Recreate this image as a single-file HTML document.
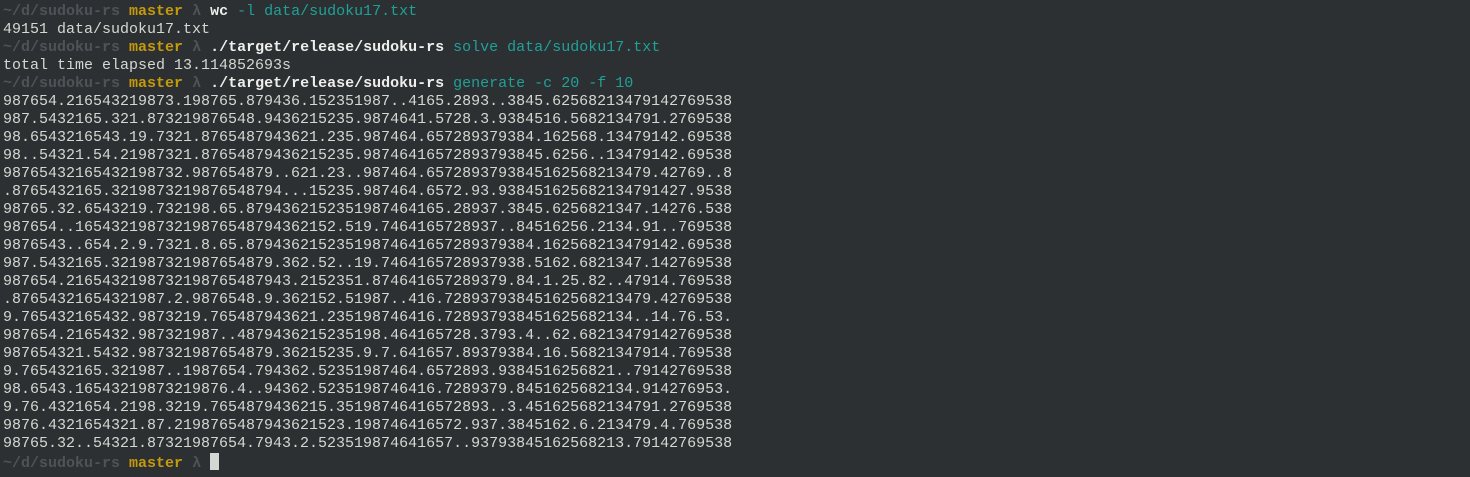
<!DOCTYPE html>
<html><head><meta charset="utf-8"><style>
html,body{margin:0;padding:0;background:#2c3032;width:1470px;height:477px;overflow:hidden}
pre{margin:0;padding:3px 0 0 3px;font-family:"Liberation Mono","DejaVu Sans Mono",monospace;font-size:15px;line-height:18px;color:#d4d8d2}
.p{color:#4d5357;font-weight:bold}
.m{color:#c49a0c;font-weight:bold}
.c{color:#eeeeec;font-weight:bold}
.a{color:#1fa198}
.cur{display:inline-block;width:9px;height:17px;background:#d4d8d2;vertical-align:-3px}
</style></head><body><pre><span class="p">~/d/sudoku-rs</span> <span class="m">master</span> <span class="p">λ</span> <span class="c">wc</span> <span class="a">-l data/sudoku17.txt</span>
49151 data/sudoku17.txt
<span class="p">~/d/sudoku-rs</span> <span class="m">master</span> <span class="p">λ</span> <span class="c">./target/release/sudoku-rs</span> <span class="a">solve data/sudoku17.txt</span>
total time elapsed 13.114852693s
<span class="p">~/d/sudoku-rs</span> <span class="m">master</span> <span class="p">λ</span> <span class="c">./target/release/sudoku-rs</span> <span class="a">generate -c 20 -f 10</span>
987654.216543219873.198765.879436.152351987..4165.2893..3845.62568213479142769538
987.5432165.321.873219876548.9436215235.9874641.5728.3.9384516.5682134791.2769538
98.6543216543.19.7321.8765487943621.235.987464.657289379384.162568.13479142.69538
98..54321.54.21987321.87654879436215235.98746416572893793845.6256..13479142.69538
98765432165432198732.987654879..621.23..987464.6572893793845162568213479.42769..8
.8765432165.3219873219876548794...15235.987464.6572.93.938451625682134791427.9538
98765.32.6543219.732198.65.8794362152351987464165.28937.3845.6256821347.14276.538
987654..16543219873219876548794362152.519.7464165728937..84516256.2134.91..769538
9876543..654.2.9.7321.8.65.87943621523519874641657289379384.162568213479142.69538
987.5432165.321987321987654879.362.52..19.7464165728937938.5162.6821347.142769538
987654.2165432198732198765487943.2152351.874641657289379.84.1.25.82..47914.769538
.87654321654321987.2.9876548.9.362152.51987..416.72893793845162568213479.42769538
9.765432165432.9873219.765487943621.235198746416.728937938451625682134..14.76.53.
987654.2165432.987321987..4879436215235198.464165728.3793.4..62.68213479142769538
987654321.5432.987321987654879.36215235.9.7.641657.89379384.16.56821347914.769538
9.765432165.321987..1987654.794362.52351987464.6572893.9384516256821..79142769538
98.6543.16543219873219876.4..94362.5235198746416.7289379.8451625682134.914276953.
9.76.4321654.2198.3219.7654879436215.35198746416572893..3.451625682134791.2769538
9876.4321654321.87.2198765487943621523.198746416572.937.3845162.6.213479.4.769538
98765.32..54321.87321987654.7943.2.523519874641657..93793845162568213.79142769538
<span class="p">~/d/sudoku-rs</span> <span class="m">master</span> <span class="p">λ</span> <span class="cur"></span></pre></body></html>
